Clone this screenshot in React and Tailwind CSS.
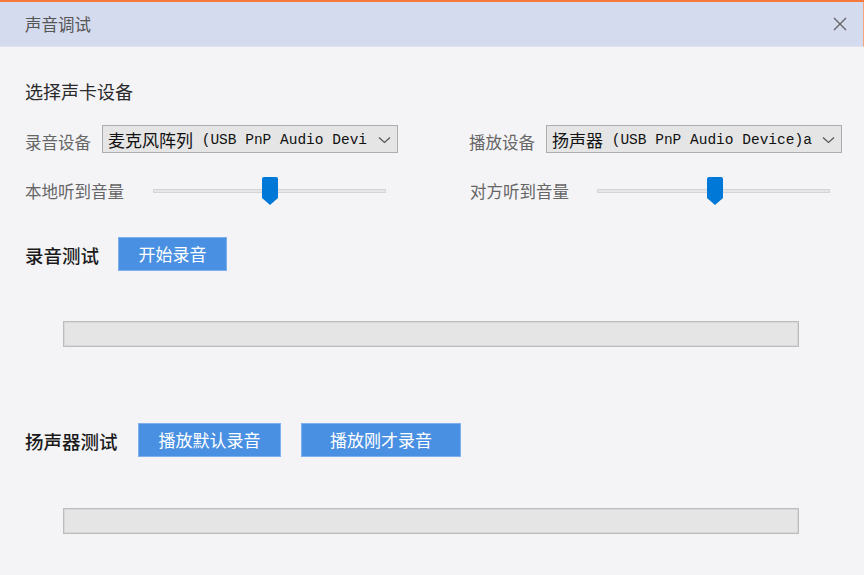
import React from "react";

const cjk = "font-['Noto_Sans_CJK_SC','Noto_Sans',sans-serif]";

function Chevron() {
  return (
    <svg width="13" height="8" viewBox="0 0 13 8" className="shrink-0">
      <polyline points="1,1.5 6.5,6.5 12,1.5" fill="none" stroke="#555" strokeWidth="1.2" />
    </svg>
  );
}

function Select({ cn, rest }) {
  return (
    <div className="shrink-0 flex items-center w-[296px] h-[28px] border border-[#adadad] bg-[#e5e5e5] pl-[5px]">
      <div className="flex-1 overflow-hidden whitespace-nowrap flex items-center h-full pt-[1px]">
        <span className={`${cjk} text-[17px] leading-[20px] text-[#111]`}>{cn}</span>
        <span className="font-['Liberation_Mono',monospace] text-[14.5px] leading-[20px] text-[#111] whitespace-pre">{rest}</span>
      </div>
      <div className="w-[26px] h-full flex items-center justify-center pl-[1px] pt-[1px]">
        <Chevron />
      </div>
    </div>
  );
}

function Slider({ left }) {
  return (
    <div className="shrink-0 relative w-[233px] h-[4px] bg-[#e6e6e6] border border-[#d4d4d4]">
      <svg
        width="16"
        height="28"
        viewBox="0 0 16 28"
        className="absolute top-[-13px]"
        style={{ left }}
      >
        <path d="M2 0 H14 Q16 0 16 2 V21 L8 28 L0 21 V2 Q0 0 2 0 Z" fill="#0078d7" />
      </svg>
    </div>
  );
}

function Btn({ w, children }) {
  return (
    <div
      className={`${w} shrink-0 h-[34px] bg-[#4a90e2] border border-[#7eb0ee] flex items-center justify-center text-white text-[17px] leading-[20px] ${cjk}`}
    >
      {children}
    </div>
  );
}

function Bar() {
  return (
    <div className="ml-[38px] w-[736px] h-[26px] border border-[#bcbcbc] bg-[#e5e5e5] shadow-[inset_0_0_0_1px_#d8d8d8]" />
  );
}

export default function App() {
  return (
    <div className={`w-[864px] h-[575px] bg-[#f4f4f7] flex flex-col overflow-hidden ${cjk}`}>
      <div className="h-[2px] bg-[#f57a3c]" />
      <div className="h-[45px] bg-[#d5dbee] flex items-center justify-between pl-[25px] pr-[16px] border-r border-[#f6a27a] border-b border-b-[#e0e4f0]">
        <span className="text-[16.5px] leading-[20px] text-[#555]">声音调试</span>
        <svg width="14" height="14" viewBox="0 0 14 14">
          <path d="M1 1 L13 13 M13 1 L1 13" stroke="#666" strokeWidth="1.4" />
        </svg>
      </div>

      <div className="flex flex-col px-[25px]">
        <div className="mt-[32px] text-[18px] leading-[24px] text-[#2a2a2a]">选择声卡设备</div>

        <div className="mt-[22px] flex items-center">
          <div className="w-[444px] shrink-0 flex items-center">
            <span className="w-[77px] shrink-0 text-[16.5px] leading-[20px] text-[#666] pt-[5px]">录音设备</span>
            <Select cn="麦克风阵列" rest=" (USB PnP Audio Devi" />
          </div>
          <div className="shrink-0 flex items-center">
            <span className="w-[77px] shrink-0 text-[16.5px] leading-[20px] text-[#666] pt-[5px]">播放设备</span>
            <Select cn="扬声器" rest=" (USB PnP Audio Device)a" />
          </div>
        </div>

        <div className="mt-[24px] h-[28px] flex items-center">
          <div className="w-[444px] shrink-0 flex items-center">
            <span className="w-[128px] shrink-0 text-[16.5px] leading-[20px] text-[#666]">本地听到音量</span>
            <Slider left={108} />
          </div>
          <div className="shrink-0 flex items-center">
            <span className="w-[128px] shrink-0 text-[16.5px] leading-[20px] text-[#666] pl-[1px]">对方听到音量</span>
            <Slider left={109} />
          </div>
        </div>

        <div className="mt-[32px] flex items-center">
          <span className="w-[93px] shrink-0 text-[18.5px] leading-[24px] text-[#1a1a1a] font-medium pt-[2px]">录音测试</span>
          <Btn w="w-[109px]">开始录音</Btn>
        </div>

        <div className="mt-[50px]">
          <Bar />
        </div>

        <div className="mt-[76px] flex items-center">
          <span className="w-[113px] shrink-0 text-[18.5px] leading-[24px] text-[#1a1a1a] font-medium pt-[2px]">扬声器测试</span>
          <Btn w="w-[143px]">播放默认录音</Btn>
          <div className="w-[20px] shrink-0" />
          <Btn w="w-[160px]">播放刚才录音</Btn>
        </div>

        <div className="mt-[51px]">
          <Bar />
        </div>
      </div>
    </div>
  );
}
